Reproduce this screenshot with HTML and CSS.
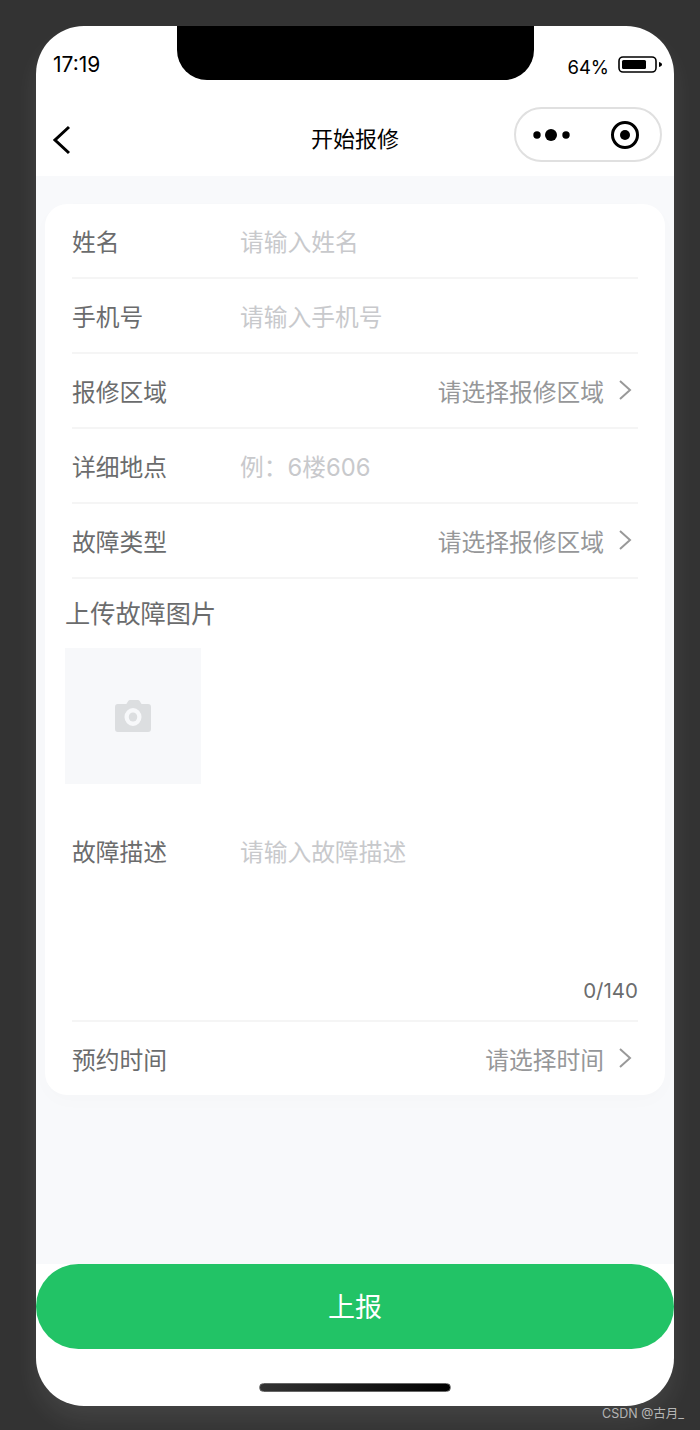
FILE: index.html
```html
<!DOCTYPE html>
<html lang="zh-CN">
<head>
  <meta charset="UTF-8">
  <meta name="viewport" content="width=device-width, initial-scale=1.0">
  <title>开始报修</title>
  <link rel="stylesheet" href="styles.css">
</head>
<body>
<div class="phone">
  <div class="notch"></div>
  <div class="status-bar">
    <span class="time">17:19</span>
    <div class="status-right">
      <span class="percent">64%</span>
      <svg class="battery" width="46" height="18" viewBox="0 0 46 18">
        <rect x="1" y="1" width="37" height="15" rx="4" fill="none" stroke="#000" stroke-width="1.6"/>
        <rect x="4" y="4" width="24" height="9" rx="1.5" fill="#000"/>
        <path d="M41 6 C43 6.5 44 7.5 44 8.5 C44 9.5 43 10.5 41 11 Z" fill="#000"/>
      </svg>
    </div>
  </div>
  <div class="nav-bar">
    <svg class="back" width="20" height="30" viewBox="0 0 20 30">
      <path d="M17 2 L3 15 L17 28" fill="none" stroke="#000" stroke-width="3"/>
    </svg>
    <span class="nav-title">开始报修</span>
    <div class="capsule">
      <svg width="38" height="16" viewBox="0 0 38 16">
        <circle cx="4" cy="8" r="3.700" fill="#000"/>
        <circle cx="18" cy="8" r="6" fill="#000"/>
        <circle cx="33" cy="8" r="3.700" fill="#000"/>
      </svg>
      <svg width="30" height="30" viewBox="0 0 30 30">
        <circle cx="15" cy="15" r="12.5" fill="none" stroke="#000" stroke-width="3"/>
        <circle cx="15" cy="15" r="5" fill="#000"/>
      </svg>
    </div>
  </div>

  <div class="content">
    <div class="card">
      <div class="row">
        <span class="label">姓名</span>
        <span class="placeholder">请输入姓名</span>
      </div>
      <div class="row">
        <span class="label">手机号</span>
        <span class="placeholder">请输入手机号</span>
      </div>
      <div class="row">
        <span class="label">报修区域</span>
        <span class="picker">请选择报修区域
          <svg class="arrow" width="14" height="22" viewBox="0 0 14 22"><path d="M2 2 L12 11 L2 20" fill="none" stroke="#999" stroke-width="2"/></svg>
        </span>
      </div>
      <div class="row">
        <span class="label">详细地点</span>
        <span class="placeholder">例：6楼606</span>
      </div>
      <div class="row">
        <span class="label">故障类型</span>
        <span class="picker">请选择报修区域
          <svg class="arrow" width="14" height="22" viewBox="0 0 14 22"><path d="M2 2 L12 11 L2 20" fill="none" stroke="#999" stroke-width="2"/></svg>
        </span>
      </div>
      <div class="upload">
        <div class="upload-title">上传故障图片</div>
        <div class="upload-box">
          <svg width="36" height="32" viewBox="0 0 38 32" preserveAspectRatio="none">
            <path fill-rule="evenodd" fill="#dcdee0" d="M12 4 L14 1 Q14.500 0 16 0 L24 0 Q25.500 0 26 1 L28 4 L35 4 Q38 4 38 7 L38 29 Q38 32 35 32 L3 32 Q0 32 0 29 L0 7 Q0 4 3 4 Z M19 8 A9 9 0 1 0 19 26 A9 9 0 1 0 19 8 Z"/>
            <circle cx="19" cy="17" r="4.500" fill="#dcdee0"/>
          </svg>
        </div>
      </div>
      <div class="desc">
        <div class="desc-main">
          <span class="label">故障描述</span>
          <span class="placeholder">请输入故障描述</span>
        </div>
        <div class="counter">0/140</div>
      </div>
      <div class="row last">
        <span class="label">预约时间</span>
        <span class="picker">请选择时间
          <svg class="arrow" width="14" height="22" viewBox="0 0 14 22"><path d="M2 2 L12 11 L2 20" fill="none" stroke="#999" stroke-width="2"/></svg>
        </span>
      </div>
    </div>
  </div>

  <div class="footer">
    <button class="submit">上报</button>
    <div class="home-bar"></div>
  </div>
</div>
<div class="watermark">CSDN @古月_</div>
</body>
</html>
```

FILE: styles.css
```css
html, body { margin: 0; padding: 0; }
body {
  width: 700px;
  height: 1430px;
  overflow: hidden;
  background: #333;
  font-family: "Inter", "Noto Sans CJK SC", sans-serif;
  position: relative;
}
.phone {
  position: relative;
  width: 638px;
  height: 1380px;
  margin: 0 0 0 36px;
  top: 26px;
  background: #fff;
  border-radius: 48px;
  overflow: hidden;
  display: flex;
  flex-direction: column;
  box-shadow: 0 14px 24px rgba(255, 255, 255, 0.08);
}
.notch {
  position: absolute;
  top: 0;
  left: 141px;
  width: 357px;
  height: 54px;
  background: #000;
  border-radius: 0 0 30px 30px;
}
.status-bar {
  height: 74px;
  flex: none;
  display: flex;
  justify-content: space-between;
  align-items: flex-start;
  padding: 0 10px 0 17px;
  box-sizing: border-box;
}
.time { font-size: 21px; line-height: 24px; margin-top: 27px; color: #000; }
.status-right { display: flex; align-items: flex-start; gap: 9px; margin-top: 29px; }
.percent { font-size: 18.500px; line-height: 24px; color: #000; }
.battery { margin-top: 1px; }
.nav-bar {
  height: 76px;
  flex: none;
  position: relative;
  display: flex;
  align-items: center;
  justify-content: space-between;
  padding: 0 12px 0 16px;
  box-sizing: border-box;
}
.back { margin-top: 4px; }
.nav-title {
  position: absolute;
  left: 0;
  right: 0;
  top: 21px;
  text-align: center;
  font-size: 22px;
  line-height: 36px;
  color: #000;
}
.capsule {
  width: 148px;
  height: 55px;
  margin-top: -8px;
  box-sizing: border-box;
  border: 2px solid #e0e0e0;
  border-radius: 28px;
  display: flex;
  align-items: center;
  justify-content: space-between;
  padding: 2px 20px 0 17px;
}
.content {
  flex: 1;
  background: #f8f9fb;
  padding: 28px 9px 0;
}
.card {
  background: #fff;
  border-radius: 22px;
  padding: 0 27px;
  box-shadow: 0 6px 20px rgba(0, 0, 0, 0.015);
}
.row {
  height: 75px;
  box-sizing: border-box;
  display: flex;
  align-items: center;
  border-bottom: 2px solid #f5f5f5;
  padding-bottom: 1px;
}
.row.last { border-bottom: 0; height: 73px; padding-bottom: 0; }
.label { width: 168px; flex: none; font-size: 23.750px; color: #6b6c6d; }
.placeholder { font-size: 23.750px; color: #c8c9cc; }
.picker {
  margin-left: auto;
  display: flex;
  align-items: center;
  gap: 14px;
  font-size: 23.750px;
  color: #969799;
  padding-right: 6px;
}
.upload { margin-left: -7px; }
.upload-title { font-size: 25.200px; line-height: 36px; color: #6b6c6d; margin-top: 16.500px; }
.upload-box {
  width: 136px;
  height: 136px;
  margin-top: 16px;
  background: #f7f8fa;
  display: flex;
  align-items: center;
  justify-content: center;
}
.desc { height: 238px; box-sizing: border-box; border-bottom: 2px solid #f5f5f5; position: relative; }
.desc-main { display: flex; padding-top: 53px; line-height: 32px; }
.counter {
  position: absolute;
  right: 0;
  bottom: 15px;
  font-size: 20.500px;
  line-height: 28px;
  color: #6b6c6d;
}
.footer {
  height: 142px;
  flex: none;
  display: flex;
  flex-direction: column;
  align-items: center;
}
.submit {
  width: 638px;
  height: 85px;
  border: 0;
  padding: 0 0 2px;
  background: #22c366;
  border-radius: 43px;
  color: #fff;
  font-family: inherit;
  font-size: 27px;
}
.home-bar {
  width: 192px;
  height: 9px;
  margin-top: 34px;
  background: linear-gradient(90deg, #333, #000);
  border: 1px solid #666;
  box-sizing: border-box;
  border-radius: 5px;
}
.watermark {
  position: absolute;
  right: 16px;
  bottom: 9px;
  font-size: 12.500px;
  line-height: 14px;
  color: #b5b5b5;
}
```
